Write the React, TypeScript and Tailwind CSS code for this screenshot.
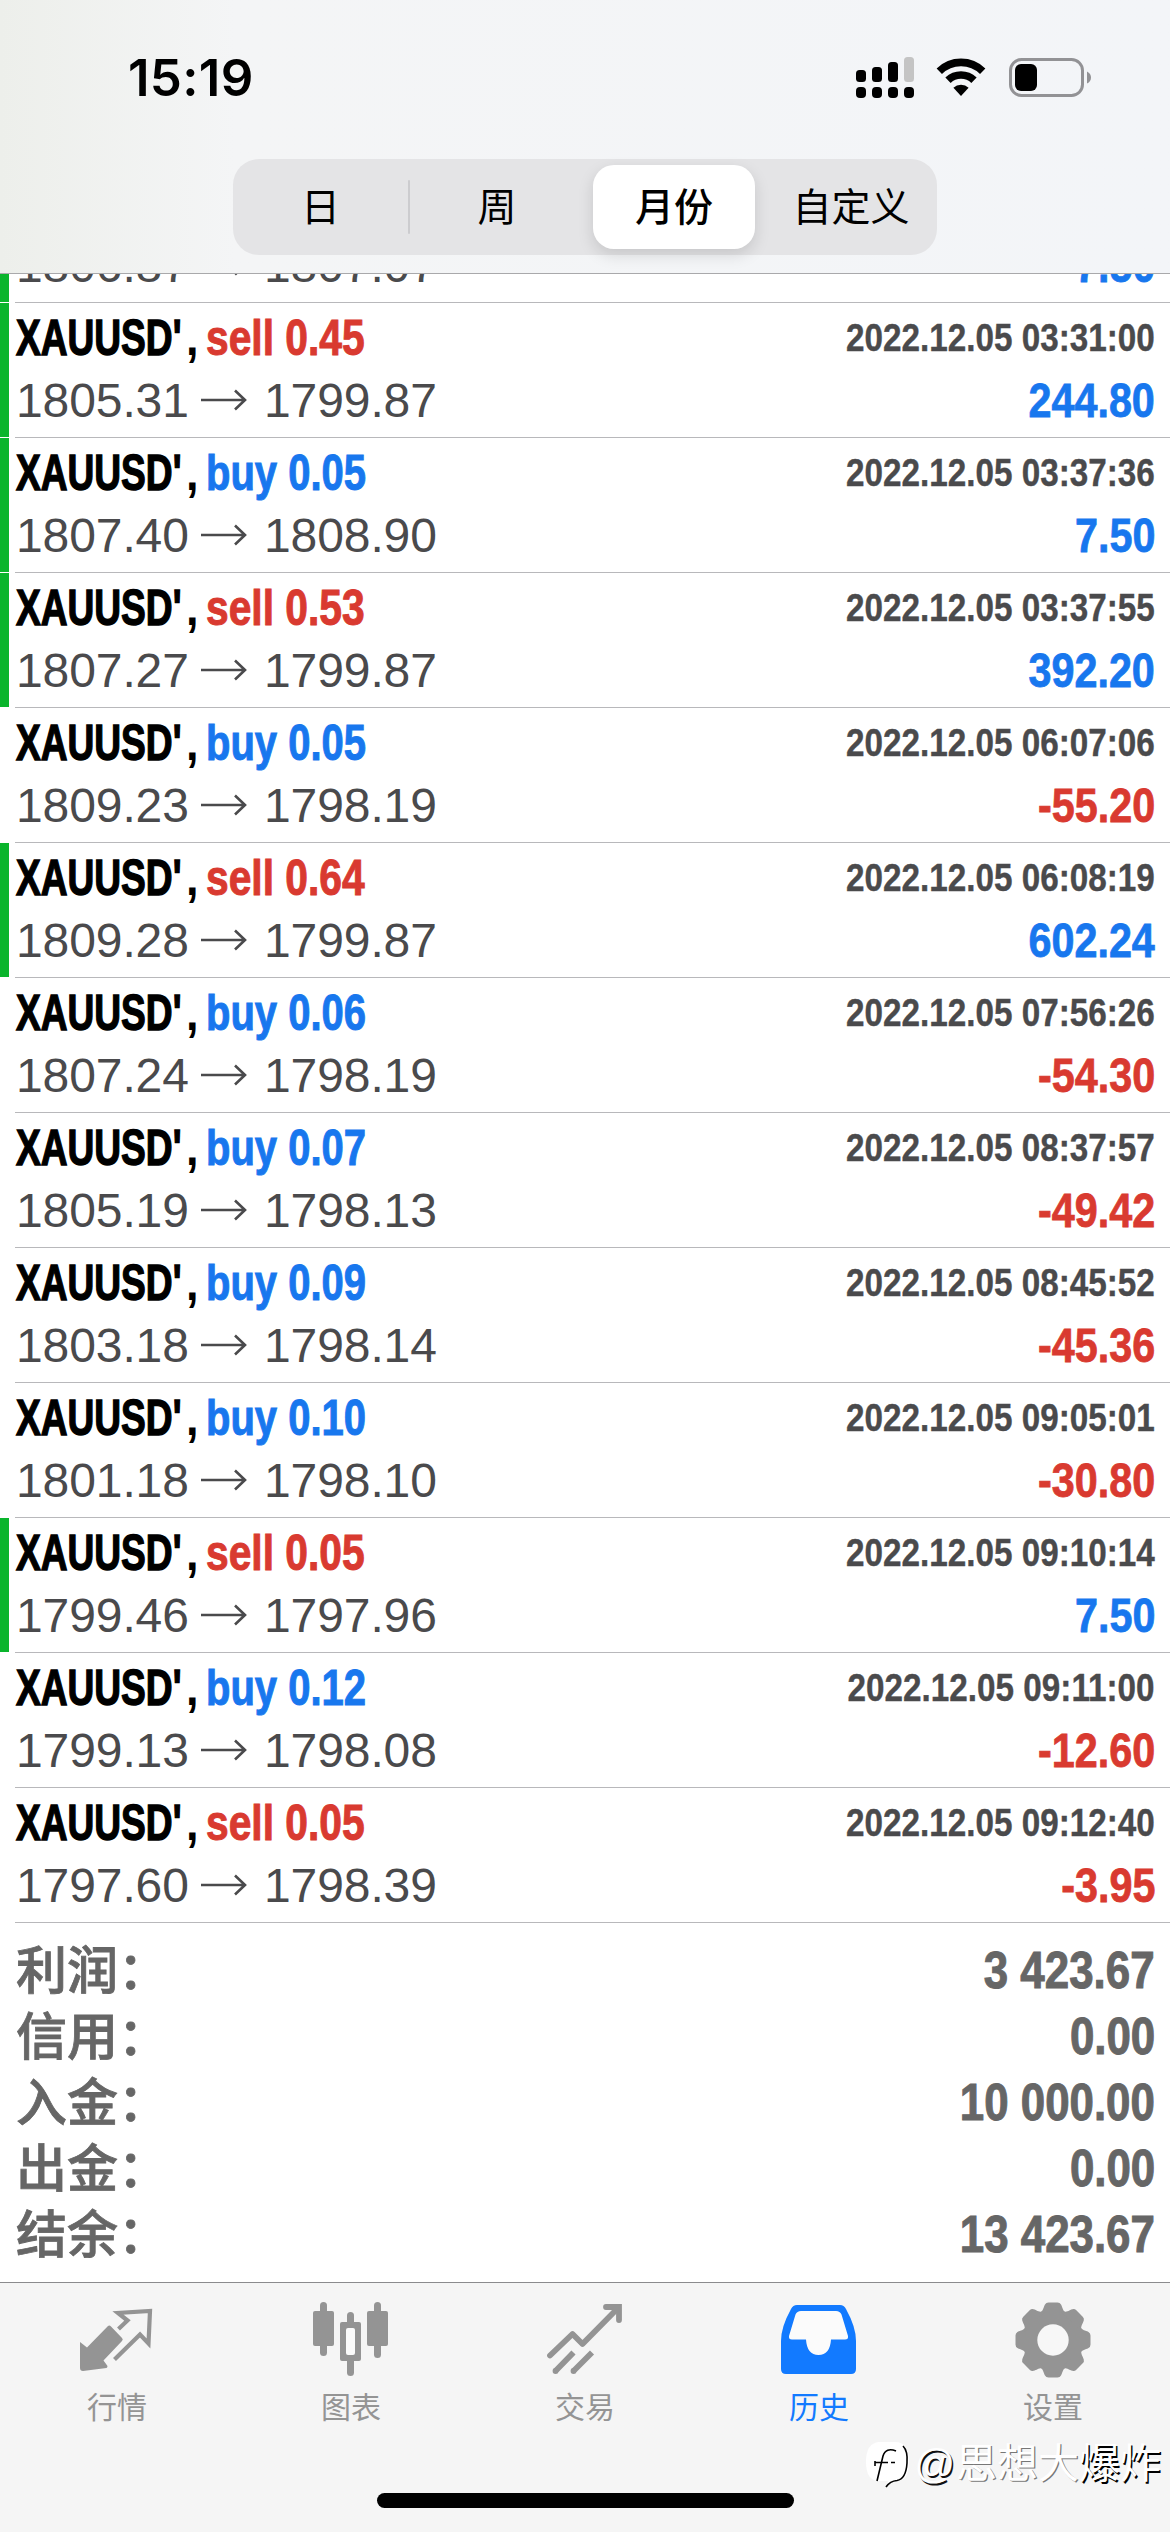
import React from "react";
import { clsx } from "clsx";

type Deal = {
  side: "buy" | "sell";
  volume: string;
  open: string;
  close: string;
  time: string;
  profit: string;
  tp?: boolean;
};

const deals: Deal[] = [
  { side: "sell", volume: "0.45", open: "1805.31", close: "1799.87", time: "2022.12.05 03:31:00", profit: "244.80", tp: true },
  { side: "buy", volume: "0.05", open: "1807.40", close: "1808.90", time: "2022.12.05 03:37:36", profit: "7.50", tp: true },
  { side: "sell", volume: "0.53", open: "1807.27", close: "1799.87", time: "2022.12.05 03:37:55", profit: "392.20", tp: true },
  { side: "buy", volume: "0.05", open: "1809.23", close: "1798.19", time: "2022.12.05 06:07:06", profit: "-55.20" },
  { side: "sell", volume: "0.64", open: "1809.28", close: "1799.87", time: "2022.12.05 06:08:19", profit: "602.24", tp: true },
  { side: "buy", volume: "0.06", open: "1807.24", close: "1798.19", time: "2022.12.05 07:56:26", profit: "-54.30" },
  { side: "buy", volume: "0.07", open: "1805.19", close: "1798.13", time: "2022.12.05 08:37:57", profit: "-49.42" },
  { side: "buy", volume: "0.09", open: "1803.18", close: "1798.14", time: "2022.12.05 08:45:52", profit: "-45.36" },
  { side: "buy", volume: "0.10", open: "1801.18", close: "1798.10", time: "2022.12.05 09:05:01", profit: "-30.80" },
  { side: "sell", volume: "0.05", open: "1799.46", close: "1797.96", time: "2022.12.05 09:10:14", profit: "7.50", tp: true },
  { side: "buy", volume: "0.12", open: "1799.13", close: "1798.08", time: "2022.12.05 09:11:00", profit: "-12.60" },
  { side: "sell", volume: "0.05", open: "1797.60", close: "1798.39", time: "2022.12.05 09:12:40", profit: "-3.95" },
];

const totals = [
  ["利润", "3 423.67"],
  ["信用", "0.00"],
  ["入金", "10 000.00"],
  ["出金", "0.00"],
  ["结余", "13 423.67"],
];

function StatusBar() {
  return (
    <div className="flex h-[159px] items-start justify-between pr-[78px] pl-[128px]">
      <div className="mt-[48px] font-['Inter',sans-serif] text-[51px] leading-[60px] font-semibold tracking-[0.3px]">
        15:19
      </div>
      <div className="mt-[56px] flex items-start">
        <svg width="58" height="43" viewBox="0 0 58 43">
          <rect x="0" y="14" width="10" height="12" rx="3.5" />
          <rect x="16" y="11" width="10" height="15" rx="3.5" />
          <rect x="32" y="6" width="10" height="20" rx="3.5" />
          <rect x="48" y="1" width="10" height="25" rx="3.5" fill="#c4c4c4" />
          <rect x="0" y="31" width="10" height="11" rx="4" />
          <rect x="16" y="31" width="10" height="11" rx="4" />
          <rect x="32" y="31" width="10" height="11" rx="4" />
          <rect x="48" y="31" width="10" height="11" rx="4" />
        </svg>
        <svg width="50" height="38" viewBox="0 0 50 38" className="ml-[22px] mt-[2px]">
          <path d="M3.3 13.2a31 31 0 0 1 43.4 0" fill="none" stroke="#000" strokeWidth="7.6" />
          <path d="M12 22.3a18.6 18.6 0 0 1 26 0" fill="none" stroke="#000" strokeWidth="7.6" />
          <path d="M25 38l-7.6-8.2a11 11 0 0 1 15.2 0z" />
        </svg>
        <svg width="83" height="40" viewBox="0 0 83 40" className="ml-[23px] mt-[2px]">
          <rect x="1.5" y="1.5" width="72" height="36" rx="11" fill="none" stroke="#929295" strokeWidth="3" />
          <rect x="6" y="6" width="22" height="27" rx="6" />
          <path d="M78 13.5q4 2 4 6t-4 6z" fill="#929295" />
        </svg>
      </div>
    </div>
  );
}

function PeriodSwitch() {
  return (
    <div className="mx-auto flex h-24 w-[704px] items-center rounded-[26px] bg-[#e4e4e6] text-[39px] leading-none">
      <span className="w-[175px] text-center">日</span>
      <span className="h-[54px] w-[2px] rounded bg-[#cccccf]" />
      <span className="w-[173px] pl-px text-center">周</span>
      <span className="ml-[10px] flex h-[84px] w-[162px] items-center justify-center rounded-[21px] bg-white font-medium shadow-[0_6px_16px_rgba(0,0,0,0.13)]">
        月份
      </span>
      <span className="flex-1 pl-[10px] text-center">自定义</span>
    </div>
  );
}

function Arrow() {
  return (
    <svg width="46" height="22" viewBox="0 0 46 22" fill="none" stroke="#4a4a4c" strokeWidth="2.6" className="mr-[15px] ml-[12px] mb-[2px]">
      <path d="M0 11h44M34 1.5l10 9.5-10 9.5" />
    </svg>
  );
}

function Prices({ deal }: { deal: Pick<Deal, "open" | "close" | "profit"> }) {
  return (
    <div className="flex h-[59px] items-center justify-between text-[48px] leading-[59px]">
      <div className="flex items-center tracking-[-0.1px] text-[#4a4a4c]">
        <span className="w-[174px] pl-px">{deal.open}</span>
        <Arrow />
        <span className="pl-[2px]">{deal.close}</span>
      </div>
      <span
        className={clsx(
          "origin-right scale-x-[.86] font-bold [-webkit-text-stroke:0.8px_currentColor]",
          deal.profit.startsWith("-") ? "text-[#d93a30]" : "text-[#1877ee]"
        )}
      >
        {deal.profit}
      </span>
    </div>
  );
}

function DealRow({ deal }: { deal: Deal }) {
  return (
    <div className="flex h-[135px]">
      <div className={clsx("mb-px w-[9px]", deal.tp && "bg-[#0ab52c]")} />
      <div className="ml-[6px] flex-1 border-b border-[#b8b8bb] pr-[15px]">
        <div className="flex h-[68px] justify-between font-bold whitespace-nowrap">
          <div className="flex pt-px pl-px text-[50px] leading-[68px]">
            <span className="w-[170px]">
              <span className="inline-block origin-left scale-x-[.742] [-webkit-text-stroke:1.4px_currentColor]">
                XAUUSD'
              </span>
            </span>
            <span className="w-[20px] origin-left scale-x-90">,</span>
            <span
              className={clsx(
                "origin-left [-webkit-text-stroke:1px_currentColor]",
                deal.side === "buy" ? "scale-x-[.8] text-[#1877ee]" : "scale-x-[.815] text-[#d93a30]"
              )}
            >
              {deal.side} {deal.volume}
            </span>
          </div>
          <span className="origin-right scale-x-[.842] text-[39.5px] leading-[68px] text-[#4a4a4c] [-webkit-text-stroke:0.4px_currentColor]">
            {deal.time}
          </span>
        </div>
        <Prices deal={deal} />
      </div>
    </div>
  );
}

function QuotesIcon() {
  return (
    <svg width="76" height="76" viewBox="0 0 76 76" fill="currentColor">
      <path d="M1 40l7 5.500L29 24q1.500-1 3 .5L43 36q1.500 1.500 0 3L24.500 58.500l4 5.500q0 1.500-1 2L4 69q-3 0-3-3z" />
      <path d="M39.500 27l9-8.500L39 11l32-2-1.500 32.500-8.500-9L35.500 57.500" fill="none" stroke="currentColor" strokeWidth="4.200" strokeLinejoin="miter" />
    </svg>
  );
}

function ChartIcon() {
  return (
    <svg width="76" height="76" viewBox="0 0 76 76" fill="currentColor">
      <rect x="7" y="0" width="7" height="54" rx="3.500" />
      <rect x="0" y="9" width="21" height="35" rx="2" />
      <rect x="61" y="0" width="7" height="56" rx="3.500" />
      <rect x="54" y="9" width="21" height="35" rx="2" />
      <rect x="34" y="10" width="7" height="64" rx="3.500" />
      <rect x="27" y="20" width="21" height="39" rx="2" />
      <rect x="33" y="26" width="9" height="27" rx="2" fill="#fbfbfb" />
    </svg>
  );
}

function TradeIcon() {
  return (
    <svg width="76" height="76" viewBox="0 0 76 76" fill="none" stroke="currentColor" strokeWidth="5.800">
      <path d="M3 53.500L25.500 32l10 10L71 6" strokeLinecap="round" strokeLinejoin="round" />
      <path d="M59 5h13v13" strokeLinecap="round" />
      <path d="M8 69.500l18.500-19M26 69.500L45 50.500" />
      <circle cx="8.500" cy="69" r="2.900" fill="currentColor" stroke="none" />
      <circle cx="26.500" cy="69" r="2.900" fill="currentColor" stroke="none" />
    </svg>
  );
}

function HistoryIcon() {
  return (
    <svg width="76" height="76" viewBox="0 0 76 76" fill="currentColor">
      <path d="M16 3h43q4 0 6 4 10 18 10 32v28q0 5-5 5H5q-5 0-5-5V39Q0 25 10 7q2-4 6-4z" />
      <path d="M20 9h35q4 0 5.500 3.500L67 34q.5 3.500-3 3.500H50q-1 15.500-12.500 15.500T25 37.500H11Q7.500 37.500 8 34l6.500-21.500Q16 9 20 9z" fill="#fbfbfb" />
    </svg>
  );
}

function SettingsIcon() {
  return (
    <svg width="76" height="76" viewBox="-38 -38 76 76" fill="currentColor">
      <circle r="30.500" />
      {[0, 45, 90, 135, 180, 225, 270, 315].map((a) => (
        <path
          key={a}
          transform={`rotate(${a})`}
          d="M-14 -26C-9 -30 -10 -32 -8 -35.500Q-7 -37.500 -4.500 -37.500H4.500Q7 -37.500 8 -35.500C10 -32 9 -30 14 -26z"
        />
      ))}
      <circle r="15.700" fill="#f7f7f7" />
    </svg>
  );
}

const tabs = [
  { label: "行情", icon: <QuotesIcon /> },
  { label: "图表", icon: <ChartIcon /> },
  { label: "交易", icon: <TradeIcon /> },
  { label: "历史", icon: <HistoryIcon />, active: true },
  { label: "设置", icon: <SettingsIcon /> },
];

function Watermark() {
  return (
    <div className="absolute right-[9px] bottom-[40px] flex items-center text-[41px] leading-[56px] text-white">
      <svg width="46" height="50" viewBox="0 0 46 50" className="mr-[3px] mt-[4px]">
        <path d="M14 1h16q14 0 14 20T31 40q-7 0-10 6l2-6h-9Q1 40 1 21T14 1z" fill="#fff" />
        <path
          d="M38 5q5 5 4 17-1 16-10 17.500-7 .5-11 6.500M31 10q-10-4-13 5l-6 25M10 20v5M10 21.500h13M26 21.500h4"
          fill="none"
          stroke="#000"
          strokeWidth="1.600"
        />
      </svg>
      <span className="mr-px font-['Liberation_Sans',sans-serif] text-[40px] [text-shadow:1.5px_1.5px_0_#111]">@</span>
      <span className="[text-shadow:1.2px_1.2px_0_#777]">思想大</span>
      <span className="[text-shadow:1.5px_1.5px_0_#000]">爆炸</span>
    </div>
  );
}

export default function App() {
  return (
    <div className="relative flex h-[2532px] w-[1170px] flex-col overflow-hidden bg-white font-['Liberation_Sans','Noto_Sans_CJK_SC',sans-serif] text-black">
      <header className="h-[274px] border-b border-[#a9a9ab] bg-linear-to-r from-[#edefeb] via-[#f4f5f6] via-20% to-[#f3f5f8]">
        <StatusBar />
        <PeriodSwitch />
      </header>

      {/* row scrolled under the header */}
      <div className="flex h-[29px] items-end overflow-hidden">
        <div className="mb-px h-[28px] w-[9px] bg-[#0ab52c]" />
        <div className="ml-[6px] flex-1 border-b border-[#b8b8bb] pr-[15px] pb-[7px]">
          <Prices deal={{ open: "1806.87", close: "1807.07", profit: "7.50" }} />
        </div>
      </div>

      {deals.map((deal) => (
        <DealRow key={deal.time} deal={deal} />
      ))}

      <div className="flex-1 pt-[15px] pr-[15px] pl-[16px] text-[51px] font-bold text-[#666]">
        {totals.map(([label, value]) => (
          <div key={label} className="flex h-[66px] justify-between leading-[66px]">
            <span className="-mt-[4px] font-['Noto_Sans_CJK_SC',sans-serif] font-medium whitespace-nowrap [-webkit-text-stroke:0.8px_currentColor]">
              {label}：
            </span>
            <span className="origin-right scale-x-[.86] [-webkit-text-stroke:1px_currentColor]">{value}</span>
          </div>
        ))}
      </div>

      <nav className="relative h-[250px] border-t border-[#8b8b8d] bg-[#f5f5f5]">
        <div className="grid grid-cols-5 pt-[19px]">
          {tabs.map((tab) => (
            <div
              key={tab.label}
              className={clsx("flex flex-col items-center", tab.active ? "text-[#127aff]" : "text-[#949494]")}
            >
              {tab.icon}
              <span className="mt-[10px] text-[30px] leading-[40px]">{tab.label}</span>
            </div>
          ))}
        </div>
        <div className="mx-auto mt-[65px] h-[15px] w-[417px] rounded-full bg-black" />
        <Watermark />
      </nav>
    </div>
  );
}
